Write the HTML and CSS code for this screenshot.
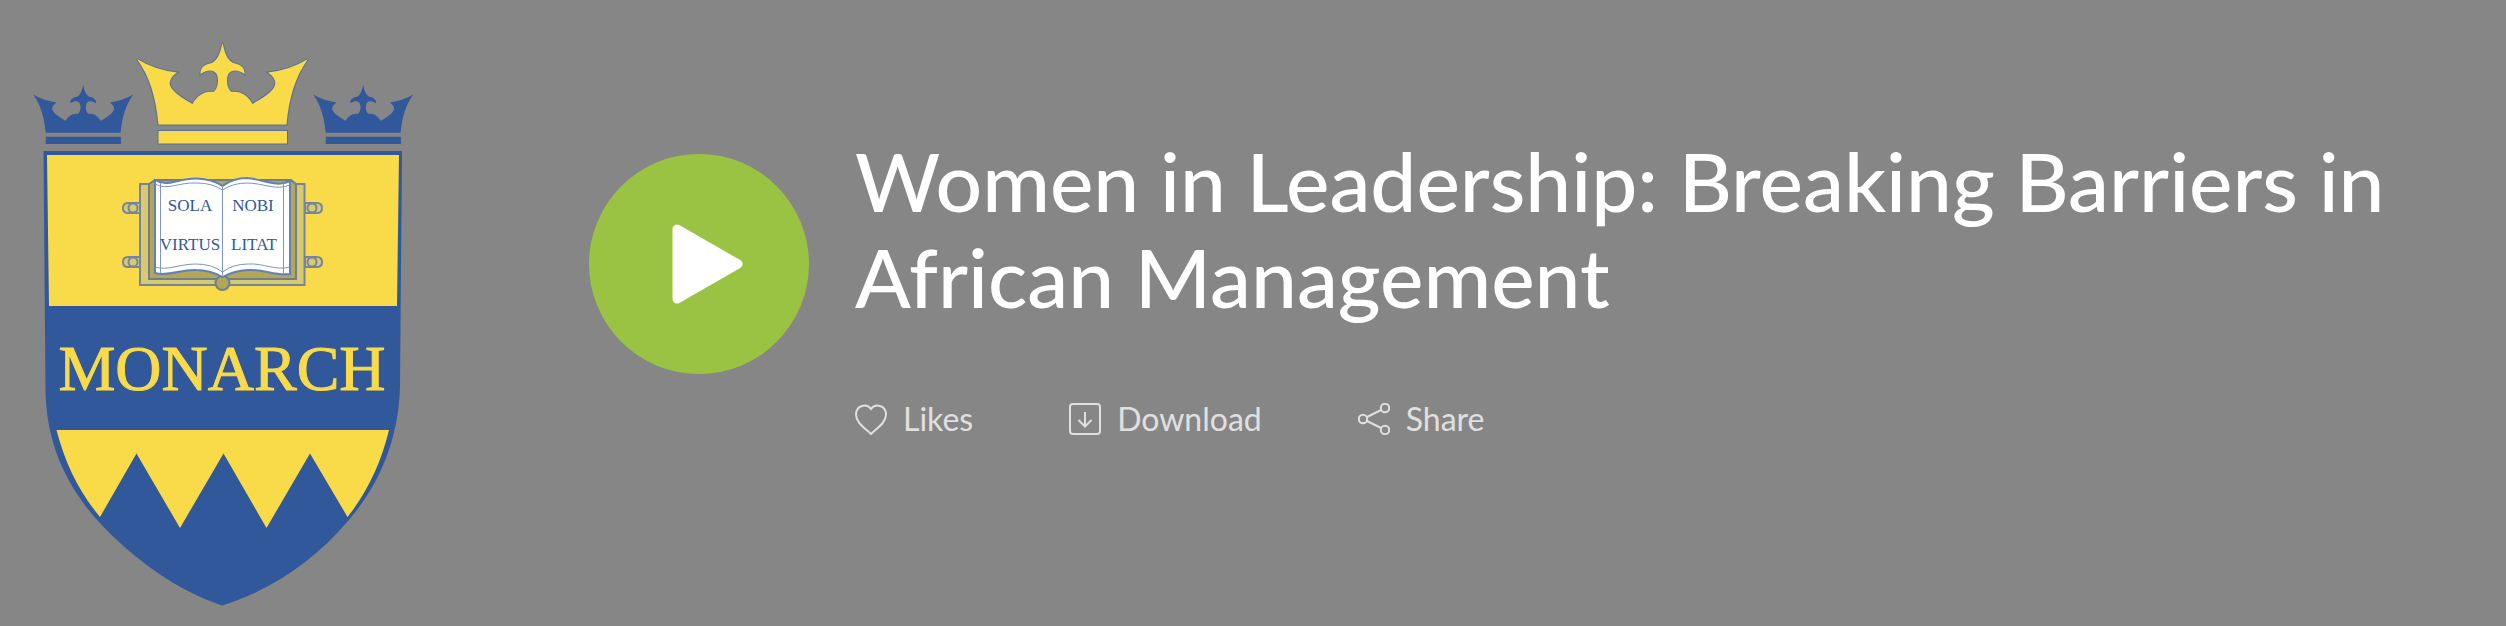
FILE: index.html
```html
<!DOCTYPE html>
<html lang="en">
<head>
  <meta charset="UTF-8" />
  <meta name="viewport" content="width=device-width, initial-scale=1.0"/>
  <title>Women in Leadership: Breaking Barriers in African Management</title>
  <link rel="stylesheet" href="styles.css">
</head>
<body>
  <main class="player">
    <!-- School crest -->
    <svg class="crest" viewBox="0 0 446 626" role="img" aria-label="Monarch crest">
      <defs>
        <g id="crown">
          <path d="M137 59 Q155 70 177 72.500 C169 78 168 84 172 89 C177 95 184 99 192.500 104 C197 96 204 91 213.500 92 C219 88 219 77 216 73 C212 69 206 70 200.500 74 C200 66 207 64 212 63 C218 60 221 51 222.500 42.500 C224 51 227 60 233 63 C238 64 245 66 244.500 74 C239 70 233 69 229 73 C226 77 226 88 231.500 92 C241 91 248 96 252.500 104 C261 99 268 95 273 89 C277 84 276 78 268 72.500 Q290 70 308 59 C295 77 289 98 286.500 124.500 H158.500 C156 98 150 77 137 59 Z"/>
          <path d="M158.500 131 H287 V143.500 H158.500 Z"/>
        </g>
      </defs>
      <use class="crown-gold" href="#crown"/>
      <use class="blue" href="#crown" transform="translate(-47 60) scale(.585)"/>
      <use class="blue" href="#crown" transform="translate(233 60) scale(.585)"/>

      <!-- Shield -->
      <path class="blue" d="M43.500 151 H402 L400 386 C399 435 382 482 348 521 C315 560 270 591 222 605.500 C178 591 133 559 98 521 C61 480 46 435 45.500 390 Z"/>
      <path class="gold" d="M47 155 H399 L397 306 H49 Z"/>
      <path class="gold" d="M56.500 430 H389 C381 464 366 494 347.500 517 L310 453.500 L266.500 528 L223.500 453.500 L180 528 L136.500 453.500 L100 517 C79 492 65 463 56.500 430 Z"/>

      <!-- Book -->
      <g class="clasp">
        <path d="M140 203 H128 Q123 203 123 208 Q123 213 128 213 H140 Z"/>
        <path d="M140 257 H128 Q123 257 123 262 Q123 267 128 267 H140 Z"/>
        <path d="M305 203 H317 Q322 203 322 208 Q322 213 317 213 H305 Z"/>
        <path d="M305 257 H317 Q322 257 322 262 Q322 267 317 267 H305 Z"/>
        <circle cx="133" cy="208" r="4.500"/>
        <circle cx="133" cy="262" r="4.500"/>
        <circle cx="312" cy="208" r="4.500"/>
        <circle cx="312" cy="262" r="4.500"/>
      </g>
      <path class="cover" d="M140 184 H304.500 V285 H140 Z"/>
      <path class="cover-dark" d="M149 184 L155 180 H291 L296 184 V279 H149 Z"/>
      <circle class="cover-dark" cx="222.500" cy="283" r="7"/>
      <path class="page" d="M155 180 C168 188 177 178 197 178.500 Q212 179 222.500 186 Q233 178 247 178 C263 179 276 188 290 181 V274 C275 276 264 269 248 270 Q233 271 222.500 277 Q210 270 196 270 C181 269 169 277 155 273 Z"/>
      <path class="line" d="M155 184 C168 191 178 182 197 183 Q212 183 222.500 190 Q233 183 247 183 C263 183 276 191 290 185 M155 267 C168 271 179 264 196 264 Q212 264 222.500 272 Q233 264 248 264 C264 263 275 271 290 267 M160.500 183 V273 M283.500 183 V274 M222.500 186 V277"/>
      <g class="motto">
        <text x="190" y="211">SOLA</text>
        <text x="253" y="211">NOBI</text>
        <text x="190" y="250">VIRTUS</text>
        <text x="254" y="250">LITAT</text>
      </g>
      <text class="name" x="222" y="390">MONARCH</text>
    </svg>

    <button class="play" type="button" aria-label="Play">
      <svg viewBox="0 0 220 220">
        <path d="M88 75 V145 L149 110 Z"/>
      </svg>
    </button>

    <div class="info">
      <h1>Women in Leadership: Breaking Barriers in African Management</h1>
      <div class="actions">
        <button type="button">
          <svg viewBox="0 0 32 32"><path d="M16 31 C10 25 1 20 1 11.500 C1 2 12 0 16 6 C20 0 31 2 31 11.500 C31 20 22 25 16 31 Z"/></svg>
          Likes
        </button>
        <button type="button">
          <svg viewBox="0 0 32 32"><rect x="1" y="1" width="30" height="30" rx="3"/><path d="M16 9 V23 M9.500 17 L16 23.500 L22.500 17"/></svg>
          Download
        </button>
        <button type="button">
          <svg viewBox="0 0 32 32"><circle cx="5" cy="16" r="4.200"/><circle cx="27" cy="5" r="4.200"/><circle cx="27" cy="27" r="4.200"/><path d="M9 14 L23 7 M9 18 L23 25"/></svg>
          Share
        </button>
      </div>
    </div>
  </main>
</body>
</html>
```

FILE: styles.css
```css
body {
  background: #868686;
  color: white;
  font-family: Lato, sans-serif;
  margin: 0;
}

.player {
  display: flex;
  align-items: flex-start;
}

.crest {
  width: 446px;
  flex-shrink: 0;
}

.blue {
  fill: #30589b;
}

.gold {
  fill: #f9db49;
}

.crown-gold {
  fill: #f9db49;
  stroke: #58709a;
  stroke-width: 2;
  paint-order: stroke;
}

.clasp, .cover {
  fill: #d9ca70;
  stroke: #7485a0;
  stroke-width: 2;
}

.cover-dark {
  fill: #b2a756;
  stroke: #6d7f91;
  stroke-width: 2;
}

.page {
  fill: white;
  stroke: #6480b4;
  stroke-width: 2;
}

.line {
  fill: none;
  stroke: #7d95c0;
  stroke-width: 1;
}

.motto {
  fill: #30589b;
  font-family: "Liberation Serif", serif;
  font-size: 17px;
  text-anchor: middle;
}

.name {
  fill: #f9db49;
  stroke: #f9db49;
  stroke-width: 1;
  font-family: "Liberation Serif", serif;
  font-size: 64px;
  text-anchor: middle;
}

button {
  background: none;
  border: 0;
  padding: 0;
  color: inherit;
  font-family: inherit;
  cursor: pointer;
}

.play {
  width: 220px;
  height: 220px;
  flex-shrink: 0;
  margin: 154px 46px 0 143px;
  background: #9ac243;
  border-radius: 50%;
}

.play svg {
  display: block;
  fill: white;
  stroke: white;
  stroke-width: 9;
  stroke-linejoin: round;
}

.info {
  flex: 1;
  padding: 132px 80px 0 0;
}

h1 {
  margin: 0;
  font-size: 82px;
  font-weight: 500;
  line-height: 96px;
}

.actions {
  display: flex;
  gap: 96px;
  margin-top: 75px;
  color: #e0e0e0;
}

.actions button {
  display: flex;
  align-items: center;
  gap: 16px;
  font-size: 32px;
  line-height: 40px;
}

.actions svg {
  width: 32px;
  height: 32px;
  fill: none;
  stroke: currentColor;
  stroke-width: 2;
}
```
